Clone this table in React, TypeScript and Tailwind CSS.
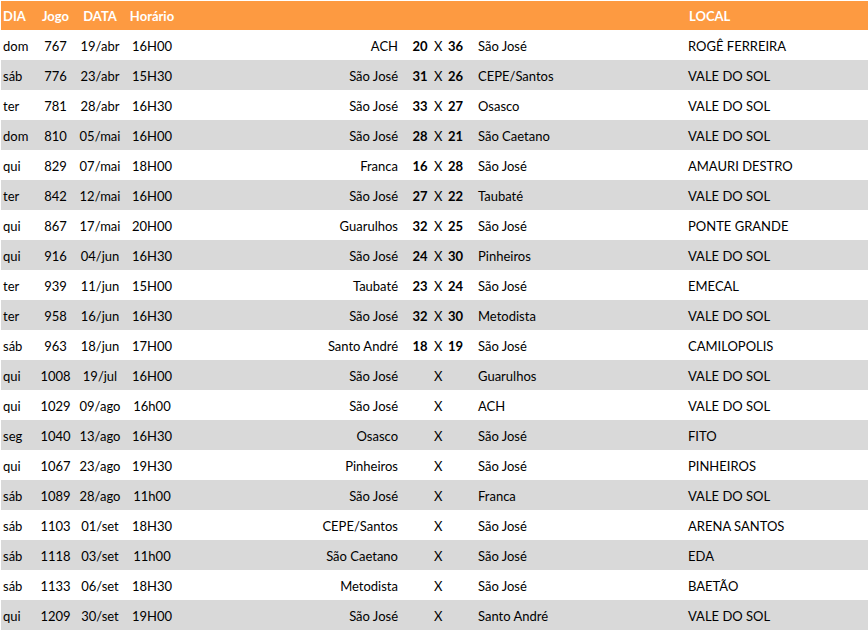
import React from "react";

type Game = {
  dia: string;
  jogo: string;
  data: string;
  hora: string;
  casa: string;
  pc?: string;
  pf?: string;
  fora: string;
  local: string;
};

const games: Game[] = [
  { dia: "dom", jogo: "767", data: "19/abr", hora: "16H00", casa: "ACH", pc: "20", pf: "36", fora: "São José", local: "ROGÊ FERREIRA" },
  { dia: "sáb", jogo: "776", data: "23/abr", hora: "15H30", casa: "São José", pc: "31", pf: "26", fora: "CEPE/Santos", local: "VALE DO SOL" },
  { dia: "ter", jogo: "781", data: "28/abr", hora: "16H30", casa: "São José", pc: "33", pf: "27", fora: "Osasco", local: "VALE DO SOL" },
  { dia: "dom", jogo: "810", data: "05/mai", hora: "16H00", casa: "São José", pc: "28", pf: "21", fora: "São Caetano", local: "VALE DO SOL" },
  { dia: "qui", jogo: "829", data: "07/mai", hora: "18H00", casa: "Franca", pc: "16", pf: "28", fora: "São José", local: "AMAURI DESTRO" },
  { dia: "ter", jogo: "842", data: "12/mai", hora: "16H00", casa: "São José", pc: "27", pf: "22", fora: "Taubaté", local: "VALE DO SOL" },
  { dia: "qui", jogo: "867", data: "17/mai", hora: "20H00", casa: "Guarulhos", pc: "32", pf: "25", fora: "São José", local: "PONTE GRANDE" },
  { dia: "qui", jogo: "916", data: "04/jun", hora: "16H30", casa: "São José", pc: "24", pf: "30", fora: "Pinheiros", local: "VALE DO SOL" },
  { dia: "ter", jogo: "939", data: "11/jun", hora: "15H00", casa: "Taubaté", pc: "23", pf: "24", fora: "São José", local: "EMECAL" },
  { dia: "ter", jogo: "958", data: "16/jun", hora: "16H30", casa: "São José", pc: "32", pf: "30", fora: "Metodista", local: "VALE DO SOL" },
  { dia: "sáb", jogo: "963", data: "18/jun", hora: "17H00", casa: "Santo André", pc: "18", pf: "19", fora: "São José", local: "CAMILOPOLIS" },
  { dia: "qui", jogo: "1008", data: "19/jul", hora: "16H00", casa: "São José", fora: "Guarulhos", local: "VALE DO SOL" },
  { dia: "qui", jogo: "1029", data: "09/ago", hora: "16h00", casa: "São José", fora: "ACH", local: "VALE DO SOL" },
  { dia: "seg", jogo: "1040", data: "13/ago", hora: "16H30", casa: "Osasco", fora: "São José", local: "FITO" },
  { dia: "qui", jogo: "1067", data: "23/ago", hora: "19H30", casa: "Pinheiros", fora: "São José", local: "PINHEIROS" },
  { dia: "sáb", jogo: "1089", data: "28/ago", hora: "11h00", casa: "São José", fora: "Franca", local: "VALE DO SOL" },
  { dia: "sáb", jogo: "1103", data: "01/set", hora: "18H30", casa: "CEPE/Santos", fora: "São José", local: "ARENA SANTOS" },
  { dia: "sáb", jogo: "1118", data: "03/set", hora: "11h00", casa: "São Caetano", fora: "São José", local: "EDA" },
  { dia: "sáb", jogo: "1133", data: "06/set", hora: "18H30", casa: "Metodista", fora: "São José", local: "BAETÃO" },
  { dia: "qui", jogo: "1209", data: "30/set", hora: "19H00", casa: "São José", fora: "Santo André", local: "VALE DO SOL" },
];

export default function App() {
  return (
    <div className="w-[868px] h-[631px] bg-white pl-[1px] pt-[1px] font-['Lato','Liberation_Sans',sans-serif] text-[13px] text-black overflow-hidden">
      {/* header */}
      <div className="flex h-[29px] items-center pt-[2px] bg-[#fd9a41] font-bold text-white">
        <div className="w-[37px] pl-[2px]">DIA</div>
        <div className="w-[35px] text-center">Jogo</div>
        <div className="w-[54px] text-center">DATA</div>
        <div className="w-[50px] text-center">Horário</div>
        <div className="w-[509px]" />
        <div className="flex-1 pl-[3px]">LOCAL</div>
      </div>

      {games.map((g, i) => (
        <div
          key={g.jogo}
          className={`flex h-[30px] items-center pt-[3px] ${i % 2 === 1 ? "bg-[#d9d9d9]" : "bg-white"}`}
        >
          <div className="w-[37px] pl-[2px]">{g.dia}</div>
          <div className="w-[35px] text-center">{g.jogo}</div>
          <div className="w-[54px] text-center">{g.data}</div>
          <div className="w-[50px] text-center">{g.hora}</div>
          <div className="w-[229px] pr-[8px] text-right whitespace-nowrap">{g.casa}</div>
          <div className="w-[28px] text-center font-bold">{g.pc}</div>
          <div className="w-[7px] text-center">X</div>
          <div className="w-[29px] text-center font-bold">{g.pf}</div>
          <div className="w-[215px] pl-[8px] whitespace-nowrap">{g.fora}</div>
          <div className="flex-1 pl-[3px] whitespace-nowrap">{g.local}</div>
        </div>
      ))}
    </div>
  );
}
